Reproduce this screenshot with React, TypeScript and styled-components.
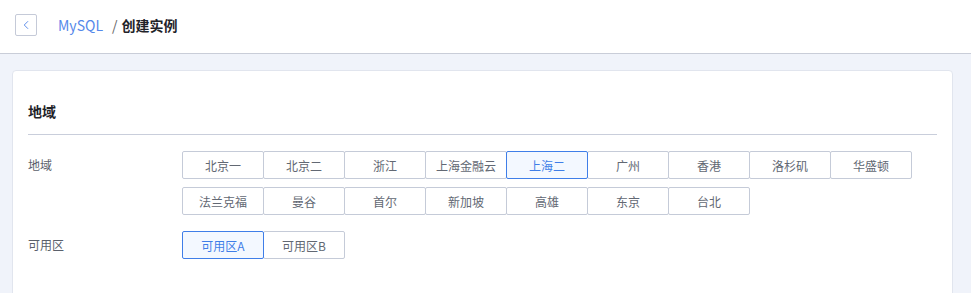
import styled, { createGlobalStyle } from "styled-components";
import { ChevronLeft } from "lucide-react";

const GlobalStyle = createGlobalStyle`
  body {
    margin: 0;
    background: #f0f3fa;
    font-family: "Noto Sans CJK SC", "Noto Sans", sans-serif;
    color: #333;
  }
`;

const REGIONS = [
  "北京一",
  "北京二",
  "浙江",
  "上海金融云",
  "上海二",
  "广州",
  "香港",
  "洛杉矶",
  "华盛顿",
  "法兰克福",
  "曼谷",
  "首尔",
  "新加坡",
  "高雄",
  "东京",
  "台北",
];

const ZONES = ["可用区A", "可用区B"];

const Header = styled.header`
  height: 54px;
  box-sizing: border-box;
  background: #fff;
  border-bottom: 1px solid #c9cdd8;
  display: flex;
  align-items: center;
  padding: 0 0 3px 15px;
`;

const BackButton = styled.button`
  width: 22px;
  height: 22px;
  padding: 0;
  border: 1px solid #c5cad8;
  border-radius: 2px;
  background: #fff;
  display: flex;
  align-items: center;
  justify-content: center;
  color: #4a80e8;
  cursor: pointer;
`;

const Crumbs = styled.div`
  margin-left: 21px;
  font-size: 14px;
  display: flex;
  align-items: center;
  gap: 9px;
`;

const CrumbLink = styled.span`
  color: #5588ea;
`;

const CrumbCurrent = styled.span`
  color: #1f2329;
  font-weight: 700;
  span {
    color: #666;
    font-weight: 400;
    margin-right: 4px;
  }
`;

const Card = styled.section`
  margin: 16px 18px 0 12px;
  background: #fff;
  border: 1px solid #e1e5ee;
  border-radius: 4px;
  padding: 0 15px;
  height: 260px;
  overflow: hidden;
`;

const SectionTitle = styled.h2<{ $top?: number }>`
  margin: 0;
  padding: ${({ $top }) => $top ?? 30}px 0 13px;
  font-size: 14px;
  line-height: 20px;
  font-weight: 700;
  color: #1f2329;
  border-bottom: 1px solid #c9cedb;
`;

const Form = styled.div`
  padding-top: 16px;
  display: flex;
  flex-direction: column;
  gap: 16px;
`;

const Row = styled.div`
  display: flex;
  align-items: flex-start;
`;

const Label = styled.div`
  width: 154px;
  flex: none;
  font-size: 12px;
  line-height: 28px;
  color: #5a606b;
`;

const Options = styled.div`
  display: flex;
  flex-wrap: wrap;
  row-gap: 8px;
  max-width: 730px;
`;

const Option = styled.button<{ $active?: boolean }>`
  position: relative;
  width: 82px;
  height: 28px;
  margin-right: -1px;
  padding: 0;
  font-family: "Noto Sans CJK SC", "Noto Sans", sans-serif;
  font-size: 12px;
  color: ${({ $active }) => ($active ? "#3f7ee8" : "#626873")};
  background: ${({ $active }) => ($active ? "#f3f8ff" : "#fff")};
  border: 1px solid ${({ $active }) => ($active ? "#3f7ee8" : "#c5cbd8")};
  z-index: ${({ $active }) => ($active ? 1 : 0)};
  border-radius: 2px;
  cursor: pointer;
`;

const App = () => {
  return (
    <>
      <GlobalStyle />
      <Header>
        <BackButton>
          <ChevronLeft size={14} strokeWidth={1.5} />
        </BackButton>
        <Crumbs>
          <CrumbLink>MySQL</CrumbLink>
          <CrumbCurrent>
            <span>/</span>创建实例
          </CrumbCurrent>
        </Crumbs>
      </Header>
      <Card>
        <SectionTitle>地域</SectionTitle>
        <Form>
          <Row>
            <Label>地域</Label>
            <Options>
              {REGIONS.map((r) => (
                <Option key={r} $active={r === "上海二"}>
                  {r}
                </Option>
              ))}
            </Options>
          </Row>
          <Row>
            <Label>可用区</Label>
            <Options>
              {ZONES.map((z) => (
                <Option key={z} $active={z === "可用区A"}>
                  {z}
                </Option>
              ))}
            </Options>
          </Row>
        </Form>
        <SectionTitle $top={31}>网络</SectionTitle>
      </Card>
    </>
  );
};

export default App;
